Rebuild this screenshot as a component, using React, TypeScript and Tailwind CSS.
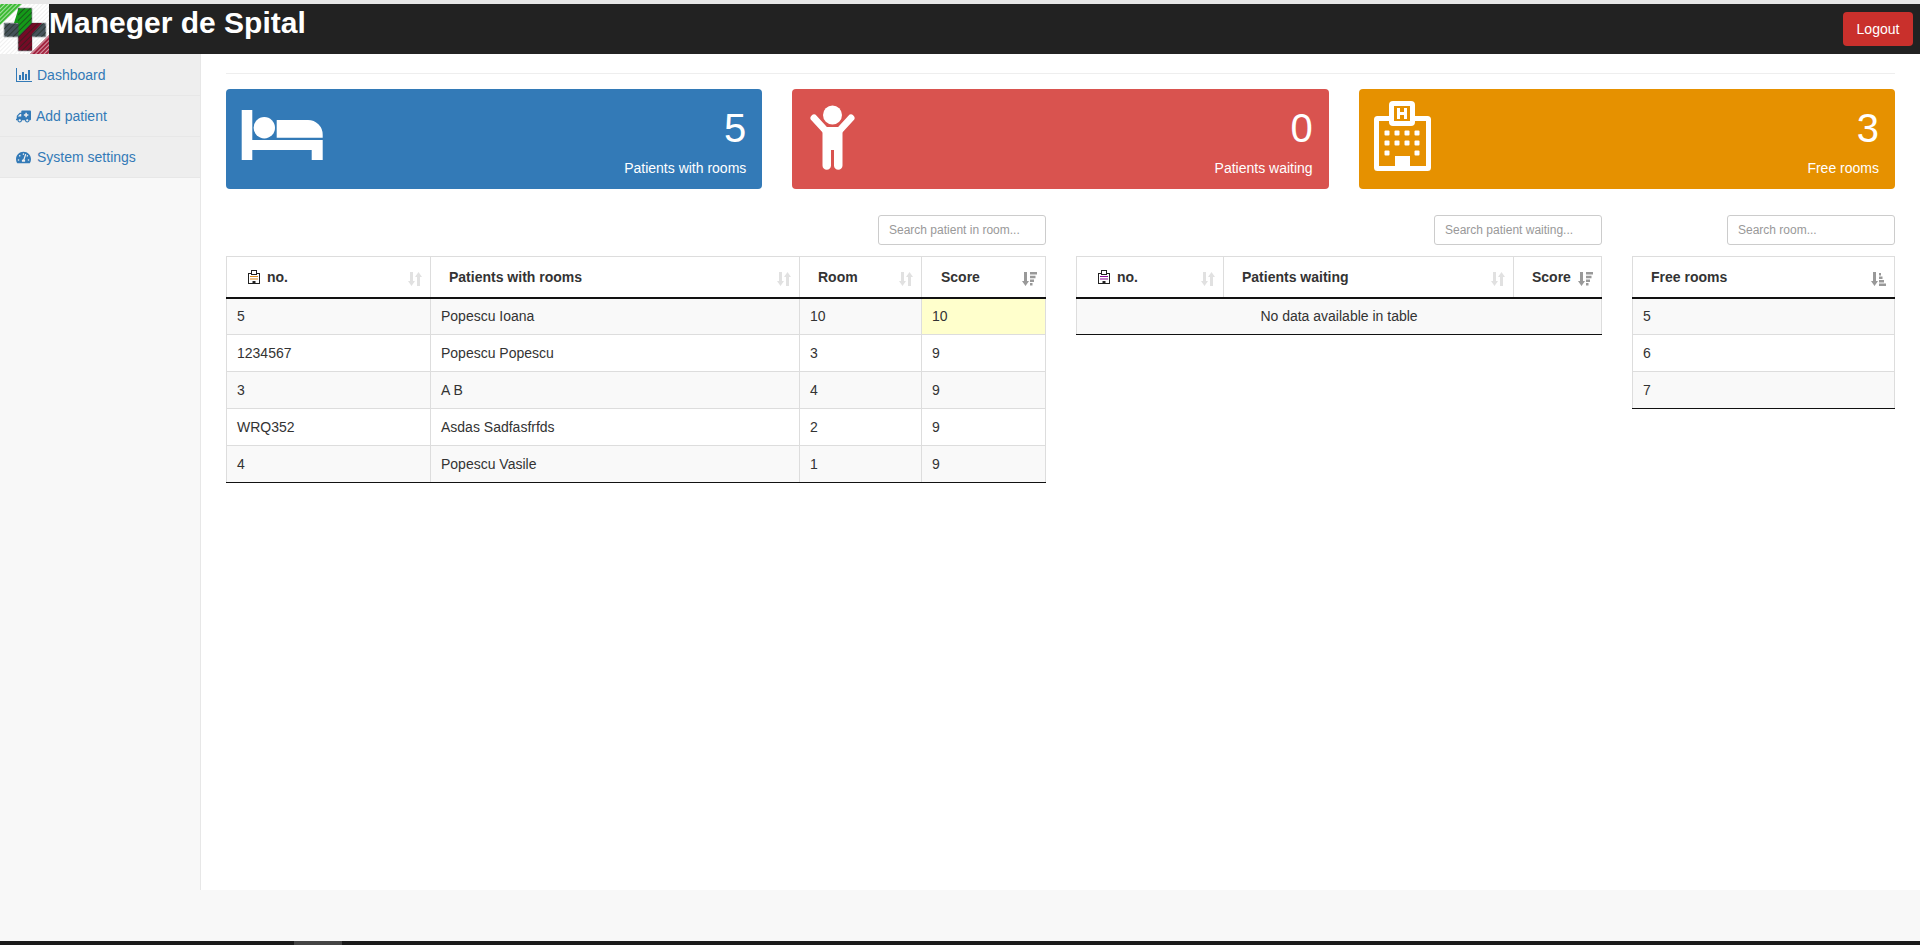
// Hospital manager dashboard: patient and room counters with three sortable tables
import React from 'react';
import { FaAmbulance, FaTachometerAlt } from 'react-icons/fa';

type SortState = 'none' | 'desc' | 'asc';

interface Column {
  label: string;
  width: number;
  sort: SortState;
  paddingClass: string;
  tint?: string;
}

interface TableProps {
  placeholder: string;
  columns: Column[];
  rows: string[][];
  highlight?: [number, number];
  emptyText?: string;
}

function Logo() {
  return (
    <svg width="49" height="50" viewBox="0 0 49 50" className="shrink-0">
      <defs>
        <pattern id="hatchWhite" width="3" height="3" patternUnits="userSpaceOnUse" patternTransform="rotate(45)">
          <rect width="1" height="3" fill="#ffffff" fillOpacity="0.55" />
        </pattern>
        <pattern id="hatchGray" width="3" height="3" patternUnits="userSpaceOnUse" patternTransform="rotate(45)">
          <rect width="1" height="3" fill="#f0f0f0" />
        </pattern>
        <pattern id="hatchDark" width="4" height="4" patternUnits="userSpaceOnUse" patternTransform="rotate(45)">
          <rect width="1" height="4" fill="#1c2a1c" fillOpacity="0.6" />
        </pattern>
      </defs>
      <rect width="49" height="50" fill="#ffffff" />
      <rect width="49" height="50" fill="url(#hatchGray)" />
      <path d="M0 0H22L0 21Z" fill="#3dbb35" />
      <path d="M0 0H22L0 21Z" fill="url(#hatchWhite)" />
      <path d="M49 31V50H30Z" fill="#a3233f" />
      <path d="M49 31V50H30Z" fill="url(#hatchWhite)" />
      <path d="M18 4H32V19H46V33H32V47H18V33H4V19H18Z" fill="#46525a" stroke="#b9bdbf" strokeWidth="1" />
      <path d="M18.5 4.5H31.5V19L18.5 32V19H14Z" fill="#149a18" />
      <path d="M32 19H42L32 30V46.5H18.5V33Z" fill="#750a26" />
      <path d="M18 4H32V19H46V33H32V47H18V33H4V19H18Z" fill="url(#hatchDark)" />
    </svg>
  );
}

function ChartIcon() {
  return (
    <svg width="16" height="14" viewBox="0 0 16 14" fill="currentColor">
      <path d="M0 0H1V13H16V14H0Z" />
      <rect x="3" y="7" width="2" height="5" />
      <rect x="6" y="4" width="2" height="8" />
      <rect x="9" y="6" width="2" height="6" />
      <rect x="12" y="2" width="2" height="10" />
    </svg>
  );
}

function BedIcon() {
  return (
    <svg width="82" height="50" viewBox="0 0 82 50" fill="#ffffff" className="mb-[8px]">
      <path d="M0.7 0H11.3V50H0.7Z" />
      <circle cx="23.3" cy="17.7" r="10.7" />
      <path d="M35.7 10H67A14.7 14.7 0 0 1 81.7 24.7V27.7H35.7Z" />
      <path d="M11 30H81.7V50H70.7V40H11Z" />
    </svg>
  );
}

function PersonIcon() {
  return (
    <svg width="50" height="66" viewBox="0 0 50 66" fill="#ffffff" className="mb-[2px]">
      <circle cx="25.5" cy="10" r="9.5" />
      <path d="M7 13L18 25M44 13L33 25" stroke="#ffffff" strokeWidth="7" strokeLinecap="round" fill="none" />
      <path d="M15.5 22H35.5V60.5A4.25 4.25 0 0 1 27 60.5V45H24V60.5A4.25 4.25 0 0 1 15.5 60.5Z" />
    </svg>
  );
}

function HospitalIcon() {
  return (
    <svg width="57" height="70" viewBox="0 0 57 70" className="mb-[7px]">
      <rect x="2.5" y="17.5" width="52" height="50" rx="1" fill="none" stroke="#ffffff" strokeWidth="5" />
      <rect x="15" y="0" width="26" height="25" rx="4" fill="#ffffff" />
      <rect x="20" y="5" width="16" height="15" fill="#e69100" />
      <path d="M23 7H26V11H30V7H33V18H30V14H26V18H23Z" fill="#ffffff" />
      {[13, 23, 33, 43].map((x) => (
        <g key={x} fill="#ffffff">
          <rect x={x - 2.5} y="29.5" width="5" height="5" rx="1" />
          <rect x={x - 2.5} y="39.5" width="5" height="5" rx="1" />
        </g>
      ))}
      <rect x="10.5" y="49.5" width="5" height="5" rx="1" fill="#ffffff" />
      <rect x="40.5" y="49.5" width="5" height="5" rx="1" fill="#ffffff" />
      <rect x="21" y="55" width="15" height="12" fill="#ffffff" />
    </svg>
  );
}

function MiniHospital({ tint }: { tint: string }) {
  return (
    <svg width="12" height="14" viewBox="0 0 12 14" className="shrink-0">
      <rect x="0.5" y="3.5" width="11" height="10" fill="#ffffff" stroke="#222222" />
      <rect x="3.5" y="0.5" width="5" height="4" fill="#ffffff" stroke="#222222" />
      <path d="M2 6H10V7H2ZM2 8.5H10V9.5H2Z" fill={tint} />
      <rect x="4.5" y="11" width="3" height="3" fill="#222222" />
    </svg>
  );
}

function SortIcon({ state }: { state: SortState }) {
  const downArrow = 'M2 0H5V9H7L3.5 14L0 9H2Z';
  if (state === 'none') {
    return (
      <svg width="14" height="14" viewBox="0 0 14 14" fill="#333333" fillOpacity="0.15">
        <path d={downArrow} />
        <path d="M9 14H12V5H14L10.5 0L7 5H9Z" />
      </svg>
    );
  }
  return (
    <svg width="15" height="14" viewBox="0 0 15 14" fill="#333333" fillOpacity="0.5">
      <path d={downArrow} />
      {state === 'desc' ? (
        <path d="M8 0H15V2.5H8ZM8 3.7H13.5V6.2H8ZM8 7.4H12V9.9H8ZM8 11.1H10.5V13.6H8Z" />
      ) : (
        <path d="M8 1H10V3.5H8ZM8 4.5H11.5V7H8ZM8 8H13V10.5H8ZM8 11.5H15V14H8Z" />
      )}
    </svg>
  );
}

function DataTable({ placeholder, columns, rows, highlight, emptyText }: TableProps) {
  const tableWidth = columns.reduce((sum, c) => sum + c.width, 0);
  return (
    <div className="flex flex-col">
      <div className="flex justify-end mb-[11px]">
        <input
          type="text"
          placeholder={placeholder}
          className="w-[168px] h-[30px] rounded-[3px] border border-[#ccc] px-[10px] text-[12px] text-[#555] placeholder-[#999] bg-white"
        />
      </div>
      <table className="table-fixed border-collapse text-[14px] text-[#333]" style={{ width: tableWidth }}>
        <colgroup>
          {columns.map((c) => (
            <col key={c.label} style={{ width: c.width }} />
          ))}
        </colgroup>
        <thead>
          <tr className="h-[41px]">
            {columns.map((c) => (
              <th
                key={c.label}
                className={`relative border border-[#ddd] border-b-2 border-b-[#111] pt-[1px] text-left font-bold ${c.paddingClass}`}
              >
                <span className="flex items-center gap-[7px]">
                  {c.tint && <MiniHospital tint={c.tint} />}
                  {c.label}
                </span>
                <span className="absolute right-[8px] top-[15px] flex">
                  <SortIcon state={c.sort} />
                </span>
              </th>
            ))}
          </tr>
        </thead>
        <tbody>
          {emptyText && (
            <tr className="h-[37px] bg-[#f9f9f9]">
              <td colSpan={columns.length} className="border-x border-x-[#ddd] border-b border-b-[#111] text-center">
                {emptyText}
              </td>
            </tr>
          )}
          {rows.map((row, i) => (
            <tr key={row[0]} className={`h-[37px] ${i % 2 === 0 ? 'bg-[#f9f9f9]' : 'bg-white'}`}>
              {row.map((cell, j) => (
                <td
                  key={j}
                  className={`border-x border-x-[#ddd] border-b px-[10px] pt-[1px] ${
                    i === rows.length - 1 ? 'border-b-[#111]' : 'border-b-[#ddd]'
                  } ${highlight && highlight[0] === i && highlight[1] === j ? 'bg-[#ffffcc]' : ''}`}
                >
                  {cell}
                </td>
              ))}
            </tr>
          ))}
        </tbody>
      </table>
    </div>
  );
}

function StatCard({ color, value, label, icon }: { color: string; value: string; label: string; icon: React.ReactNode }) {
  return (
    <div className={`flex h-[100px] items-center justify-between rounded-[4px] pl-[15px] pr-[16px] text-white ${color}`}>
      <div className="flex">{icon}</div>
      <div className="flex flex-col items-end pt-[1px]">
        <div className="text-[40px] leading-[55px]">{value}</div>
        <div className="mt-[2px] text-[14px] leading-[20px]">{label}</div>
      </div>
    </div>
  );
}

const NAV_ITEMS = [
  { label: 'Dashboard', icon: <ChartIcon />, gap: 'gap-[5px]' },
  { label: 'Add patient', icon: <FaAmbulance size={15} className="-scale-x-100" />, gap: 'gap-[5px]' },
  { label: 'System settings', icon: <FaTachometerAlt size={15} />, gap: 'gap-[6px]' },
];

export default function App() {
  return (
    <div className="flex h-[945px] flex-col overflow-hidden bg-[#f8f8f8] font-['Liberation_Sans',Arial,sans-serif] text-[14px] text-[#333]">
      <div className="h-[4px] bg-[#e7e7e7]" />
      <header className="flex h-[50px] items-start justify-between bg-[#222] pr-[7px]">
        <div className="flex items-start">
          <Logo />
          <span className="mt-[2px] text-[30px] font-bold leading-[34px] text-white">Maneger de Spital</span>
        </div>
        <button className="mt-[8px] h-[34px] w-[70px] rounded-[4px] bg-[#c9302c] text-[14px] text-white">Logout</button>
      </header>

      <div className="flex h-[836px]">
        <aside className="w-[201px] shrink-0 border-r border-r-[#e7e7e7]">
          <div className="h-px bg-[#eee]" />
          {NAV_ITEMS.map((item) => (
            <a
              key={item.label}
              className={`flex h-[41px] items-center border-b border-b-[#e7e7e7] bg-[#eee] pl-[16px] text-[#337ab7] ${item.gap}`}
            >
              {item.icon}
              {item.label}
            </a>
          ))}
        </aside>

        <main className="flex-1 bg-white pl-[25px] pr-[25px] pt-[19px]">
          <div className="h-px bg-[#eee]" />

          <div className="mt-[15px] grid grid-cols-3 gap-[30px]">
            <StatCard color="bg-[#337ab7]" value="5" label="Patients with rooms" icon={<BedIcon />} />
            <StatCard color="bg-[#d9534f]" value="0" label="Patients waiting" icon={<PersonIcon />} />
            <StatCard color="bg-[#e69100]" value="3" label="Free rooms" icon={<HospitalIcon />} />
          </div>

          <div className="mt-[26px] grid grid-cols-[820px_526px_263px] items-start gap-[30px]">
            <DataTable
              placeholder="Search patient in room..."
              columns={[
                { label: 'no.', width: 204, sort: 'none', paddingClass: 'pl-[21px]', tint: '#d98a1f' },
                { label: 'Patients with rooms', width: 369, sort: 'none', paddingClass: 'pl-[18px]' },
                { label: 'Room', width: 122, sort: 'none', paddingClass: 'pl-[18px]' },
                { label: 'Score', width: 124, sort: 'desc', paddingClass: 'pl-[19px]' },
              ]}
              rows={[
                ['5', 'Popescu Ioana', '10', '10'],
                ['1234567', 'Popescu Popescu', '3', '9'],
                ['3', 'A B', '4', '9'],
                ['WRQ352', 'Asdas Sadfasfrfds', '2', '9'],
                ['4', 'Popescu Vasile', '1', '9'],
              ]}
              highlight={[0, 3]}
            />
            <DataTable
              placeholder="Search patient waiting..."
              columns={[
                { label: 'no.', width: 147, sort: 'none', paddingClass: 'pl-[21px]', tint: '#8a0a96' },
                { label: 'Patients waiting', width: 290, sort: 'none', paddingClass: 'pl-[18px]' },
                { label: 'Score', width: 88, sort: 'desc', paddingClass: 'pl-[18px]' },
              ]}
              rows={[]}
              emptyText="No data available in table"
            />
            <DataTable
              placeholder="Search room..."
              columns={[{ label: 'Free rooms', width: 262, sort: 'asc', paddingClass: 'pl-[18px]' }]}
              rows={[['5'], ['6'], ['7']]}
            />
          </div>
        </main>
      </div>

      <div className="flex-1" />
      <div className="flex h-[4px] bg-[#1a1a1a]">
        <div className="ml-[294px] w-[48px] bg-[#444]" />
      </div>
    </div>
  );
}
